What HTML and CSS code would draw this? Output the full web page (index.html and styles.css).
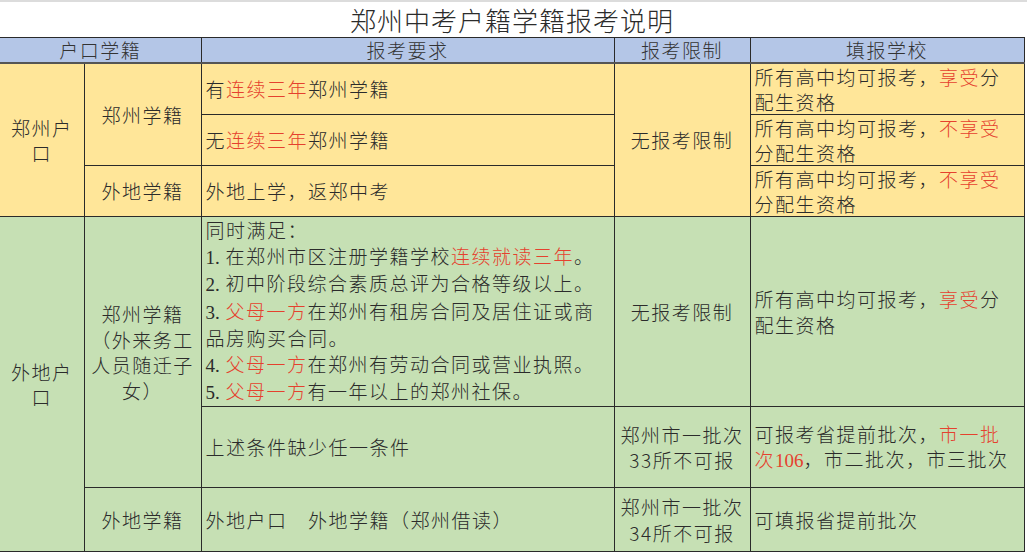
FILE: index.html
```html
<!DOCTYPE html>
<html lang="zh-CN">
<head>
<meta charset="utf-8">
<title>郑州中考户籍学籍报考说明</title>
<link rel="stylesheet" href="styles.css">
</head>
<body>
<table class="sheet">
  <colgroup>
    <col class="c1"><col class="c2"><col class="c3"><col class="c4"><col class="c5">
  </colgroup>
  <tr class="r-title"><td colspan="5" class="title">郑州中考户籍学籍报考说明</td></tr>
  <tr class="r-head">
    <th colspan="2">户口学籍</th>
    <th>报考要求</th>
    <th>报考限制</th>
    <th>填报学校</th>
  </tr>
  <tr class="y r-y">
    <td rowspan="3" class="ctr first">郑州户<br>口</td>
    <td rowspan="2" class="ctr">郑州学籍</td>
    <td class="left">有<span class="red">连续三年</span>郑州学籍</td>
    <td rowspan="3" class="ctr">无报考限制</td>
    <td class="left two">所有高中均可报考，<span class="red">享受</span>分<br>配生资格</td>
  </tr>
  <tr class="y r-y">
    <td class="left">无<span class="red">连续三年</span>郑州学籍</td>
    <td class="left two">所有高中均可报考，<span class="red">不享受</span><br>分配生资格</td>
  </tr>
  <tr class="y r-y">
    <td class="ctr">外地学籍</td>
    <td class="left">外地上学，返郑中考</td>
    <td class="left two">所有高中均可报考，<span class="red">不享受</span><br>分配生资格</td>
  </tr>
  <tr class="g r-g1">
    <td rowspan="3" class="ctr first">外地户<br>口</td>
    <td rowspan="2" class="ctr two">郑州学籍<br>（外来务工<br>人员随迁子<br>女）</td>
    <td class="left two">同时满足：<br><span class="num">1.</span> 在郑州市区注册学籍学校<span class="red">连续就读三年</span>。<br><span class="num">2.</span> 初中阶段综合素质总评为合格等级以上。<br><span class="num">3.</span> <span class="red">父母一方</span>在郑州有租房合同及居住证或商<br>品房购买合同。<br><span class="num">4.</span> <span class="red">父母一方</span>在郑州有劳动合同或营业执照。<br><span class="num">5.</span> <span class="red">父母一方</span>有一年以上的郑州社保。</td>
    <td class="ctr">无报考限制</td>
    <td class="left two">所有高中均可报考，<span class="red">享受</span>分<br>配生资格</td>
  </tr>
  <tr class="g r-g2">
    <td class="left">上述条件缺少任一条件</td>
    <td class="ctr two">郑州市一批次<br>33所不可报</td>
    <td class="left two">可报考省提前批次，<span class="red">市一批<br>次<span class="num">106</span></span>，市二批次，市三批次</td>
  </tr>
  <tr class="g r-g3">
    <td class="ctr">外地学籍</td>
    <td class="left">外地户口　外地学籍（郑州借读）</td>
    <td class="ctr two">郑州市一批次<br>34所不可报</td>
    <td class="left">可填报省提前批次</td>
  </tr>
</table>
</body>
</html>
```

FILE: styles.css
```css
html, body {
  margin: 0;
  padding: 0;
  background: #ffffff;
}
body {
  font-family: "Noto Sans CJK SC", "Noto Sans", sans-serif;
  font-weight: 300;
  color: #2b2b2b;
  border-top: 2px solid #dcdcdc;
}
.sheet {
  width: 1024px;
  border-collapse: collapse;
  table-layout: fixed;
  font-size: 19px;
  letter-spacing: 1.5px;
}
.c1 { width: 84px; }
.c2 { width: 117px; }
.c3 { width: 413px; }
.c4 { width: 136px; }
.c5 { width: 274px; }

.sheet td, .sheet th {
  border: 1.5px solid #2a2a2a;
  padding: 0;
  font-weight: 300;
  line-height: 25.5px;
  vertical-align: middle;
}
.sheet .first { border-left: none; }

.r-title { height: 35px; }
.title {
  background: #ffffff;
  text-align: center;
  font-size: 26px;
  letter-spacing: 1px;
  border-top: none !important;
  border-left: none !important;
  border-right: none !important;
  line-height: 34px;
}
.r-head { height: 26px; }
.r-head th {
  background: #b4c6e7;
  text-align: center;
  font-size: 19px;
  line-height: 24px;
  color: #333333;
  border-bottom: 2px solid #555555;
}
.r-head th:first-child { border-left: none; }

.y td { background: #ffe699; }
.g td { background: #c6e0b4; }
.r-y { height: 51px; }
.r-g1 { height: 190px; }
.r-g2 { height: 81px; }
.r-g3 { height: 64px; }

.ctr { text-align: center; }
.left { text-align: left; padding-left: 4px !important; }
.two { line-height: 25.5px; }
.y .two { line-height: 25px; }
.red { color: #e5412e; }
.num { font-family: "Liberation Serif", serif; letter-spacing: 0; }
```
